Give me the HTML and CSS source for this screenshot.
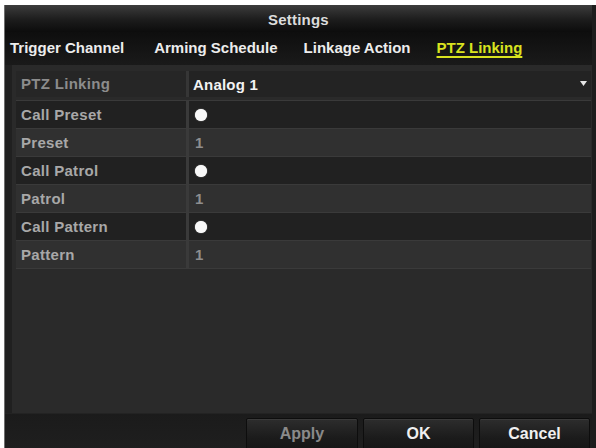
FILE: index.html
```html
<!DOCTYPE html>
<html>
<head>
<meta charset="utf-8">
<link rel="stylesheet" href="styles.css">
</head>
<body>
<div class="window">
  <div class="titlebar">Settings</div>
  <div class="tabs">
    <span class="tab first">Trigger Channel</span>
    <span class="tab">Arming Schedule</span>
    <span class="tab">Linkage Action</span>
    <span class="tab active">PTZ Linking</span>
  </div>
  <div class="panel">
    <div class="select-row">
      <div class="label dim">PTZ Linking</div>
      <div class="value select">
        <span class="val-white">Analog 1</span>
        <svg class="arrow" width="7" height="5" viewBox="0 0 7 5"><path d="M0 0 L7 0 L3.5 5 Z" fill="#e6e6e6"/></svg>
      </div>
    </div>
    <div class="grid">
      <div class="label dark">Call Preset</div>
      <div class="value dark"><span class="dot"></span></div>
      <div class="label light">Preset</div>
      <div class="value light"><span class="num">1</span></div>
      <div class="label dark">Call Patrol</div>
      <div class="value dark"><span class="dot"></span></div>
      <div class="label light">Patrol</div>
      <div class="value light"><span class="num">1</span></div>
      <div class="label dark">Call Pattern</div>
      <div class="value dark"><span class="dot"></span></div>
      <div class="label light">Pattern</div>
      <div class="value light"><span class="num">1</span></div>
    </div>
  </div>
  <div class="footer">
    <div class="btn disabled">Apply</div>
    <div class="btn">OK</div>
    <div class="btn">Cancel</div>
  </div>
</div>
</body>
</html>
```

FILE: styles.css
```css
html, body {
  margin: 0;
  padding: 0;
  background: #ffffff;
}
body {
  font-family: "Liberation Sans", Arial, sans-serif;
  font-weight: bold;
  font-size: 15px;
}
.window {
  margin: 5px 0 0 4px;
  width: 587px;
  height: 443px;
  border-left: 1px solid #6e6e6e;
  border-right: 4px solid #1d1d1d;
  box-shadow: inset -2px 0 0 #4a4a4a;
  background: #2a2a2a;
  overflow: hidden;
  display: flex;
  flex-direction: column;
}
.titlebar {
  height: 25px;
  padding-top: 2px;
  line-height: 25px;
  text-align: center;
  color: #dcdcdc;
  background: linear-gradient(#3c3c3c 0%, #1c1c1c 55%, #0c0c0c 100%);
  letter-spacing: 0.2px;
  flex: none;
}
.tabs {
  height: 33px;
  line-height: 32px;
  display: flex;
  gap: 26px;
  padding-left: 5px;
  background: linear-gradient(#0e0e0e, #1a1a1a);
  flex: none;
}
.tab {
  color: #ececec;
  white-space: nowrap;
}
.tab.first {
  padding-right: 4px;
}
.tab.active {
  color: #d9e31f;
  text-decoration: underline;
  text-underline-offset: 3px;
  text-decoration-thickness: 2px;
}
.panel {
  height: 342px;
  padding: 6px 1px 0 4px;
  border-left: 7px solid #202020;
  background: #2a2a2a;
  flex: none;
}
.select-row {
  display: grid;
  grid-template-columns: 170px 1fr;
  column-gap: 3px;
  height: 26px;
  margin-bottom: 3px;
  background: #363636;
}
.grid {
  display: grid;
  grid-template-columns: 170px 1fr;
  grid-auto-rows: 27px;
  column-gap: 3px;
  row-gap: 1px;
  padding: 1px 0;
  background: #3a3a3a;
}
.label {
  padding-left: 5px;
  line-height: 27px;
  color: #a8a8a8;
  letter-spacing: 0.3px;
  white-space: nowrap;
}
.label.dim {
  color: #8c8c8c;
  line-height: 26px;
  background: #262626;
}
.value {
  display: flex;
  align-items: center;
  padding-left: 6px;
}
.select {
  background: #232323;
  justify-content: space-between;
  padding-left: 4px;
  padding-right: 4px;
}
.val-white {
  color: #f2f2f2;
  letter-spacing: 0.2px;
}
.arrow {
  display: block;
  margin-top: -1px;
}
.dark {
  background: #212121;
}
.light {
  background: #303030;
}
.dot {
  display: block;
  width: 12px;
  height: 12px;
  border-radius: 50%;
  background: #f8f8f8;
  box-shadow: 0 0 1px #ffffff;
}
.num {
  color: #8e8e8e;
}
.footer {
  flex: 1;
  display: flex;
  justify-content: flex-end;
  gap: 5px;
  padding: 5px 2px 0 0;
  background: linear-gradient(#1b1b1b, #1f1f1f);
  box-shadow: inset 0 1px 0 #232323;
}
.btn {
  width: 109px;
  height: 32px;
  line-height: 30px;
  text-align: center;
  font-size: 16px;
  color: #f0f0f0;
  background: linear-gradient(#2d2d2d, #1b1b1b 60%, #161616);
  border: 1px solid #0d0d0d;
  border-radius: 2px;
  box-shadow: inset 0 1px 0 #3a3a3a;
}
.btn.disabled {
  width: 110px;
  color: #8a8a8a;
}
```
